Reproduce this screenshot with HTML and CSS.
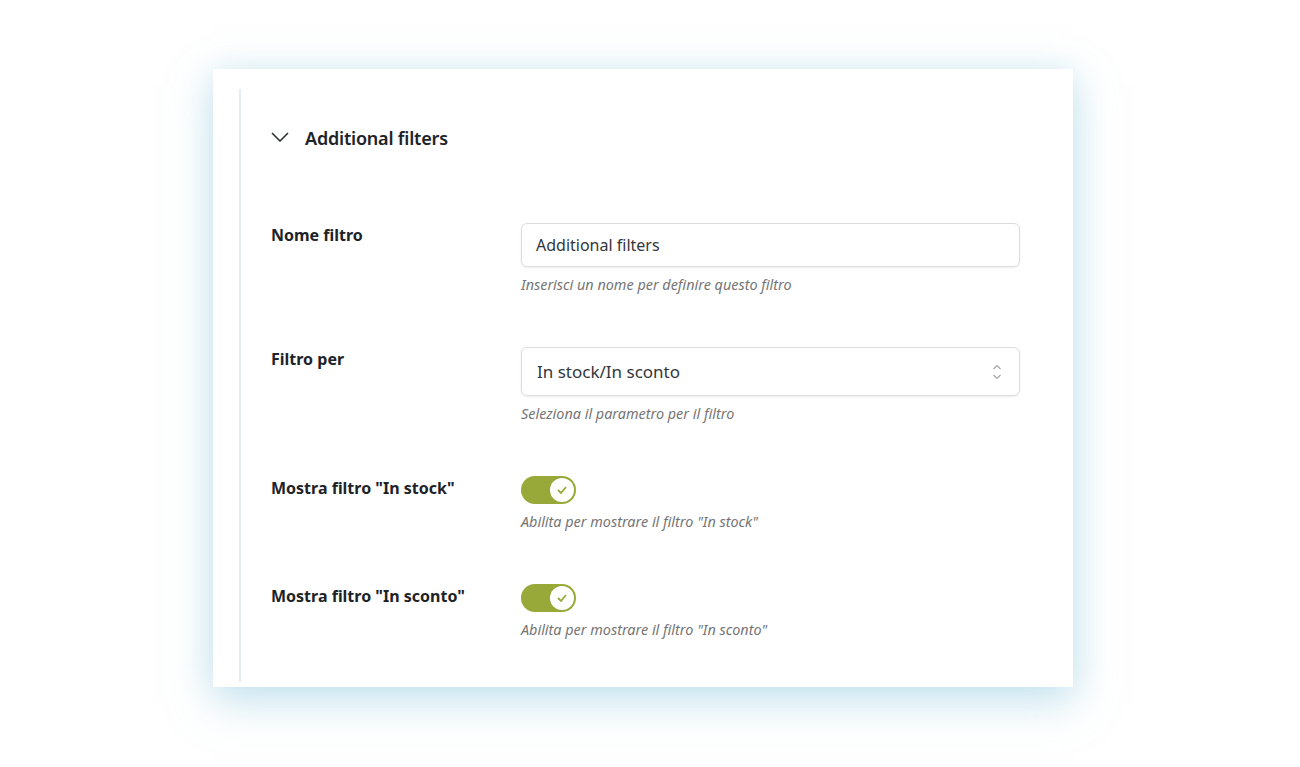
FILE: index.html
```html
<!DOCTYPE html>
<html lang="it">
<head>
    <meta charset="UTF-8">
    <meta name="viewport" content="width=device-width, initial-scale=1.0">
    <link rel="stylesheet" href="styles.css">
    <title>Additional filters</title>
</head>
<body>

    <div class="scheda">
        <div class="sezione">

            <div class="testata">
                <svg class="freccia" width="18" height="10" viewBox="0 0 18 10">
                    <path d="M1 1 L9 9 L17 1" fill="none" stroke="#2c3338" stroke-width="1.6"/>
                </svg>
                <h2>Additional filters</h2>
            </div>

            <div class="riga">
                <label class="etichetta">Nome filtro</label>
                <div class="campo">
                    <div class="input">Additional filters</div>
                    <p class="aiuto">Inserisci un nome per definire questo filtro</p>
                </div>
            </div>

            <div class="riga">
                <label class="etichetta">Filtro per</label>
                <div class="campo">
                    <div class="input select">
                        <span>In stock/In sconto</span>
                        <svg width="10" height="18" viewBox="0 0 10 18">
                            <path d="M1.5 6 L5 2.5 L8.5 6" fill="none" stroke="#a0a5aa" stroke-width="1.2"/>
                            <path d="M1.5 12 L5 15.5 L8.5 12" fill="none" stroke="#a0a5aa" stroke-width="1.2"/>
                        </svg>
                    </div>
                    <p class="aiuto">Seleziona il parametro per il filtro</p>
                </div>
            </div>

            <div class="riga">
                <label class="etichetta">Mostra filtro "In stock"</label>
                <div class="campo">
                    <div class="interruttore">
                        <span class="pallino">
                            <svg width="10" height="8" viewBox="0 0 10 8">
                                <path d="M1 4 L4 7 L9 1" fill="none" stroke="#98a939" stroke-width="1.8"/>
                            </svg>
                        </span>
                    </div>
                    <p class="aiuto">Abilita per mostrare il filtro "In stock"</p>
                </div>
            </div>

            <div class="riga">
                <label class="etichetta">Mostra filtro "In sconto"</label>
                <div class="campo">
                    <div class="interruttore">
                        <span class="pallino">
                            <svg width="10" height="8" viewBox="0 0 10 8">
                                <path d="M1 4 L4 7 L9 1" fill="none" stroke="#98a939" stroke-width="1.8"/>
                            </svg>
                        </span>
                    </div>
                    <p class="aiuto">Abilita per mostrare il filtro "In sconto"</p>
                </div>
            </div>

        </div>
    </div>

</body>
</html>
```

FILE: styles.css
```css
body {
    margin: 0;
    padding-bottom: 80px;
    background-color: #ffffff;
    font-family: "Noto Sans", "Open Sans", sans-serif;
    color: #1d2327;
}

.scheda {
    width: 860px;
    height: 618px;
    box-sizing: border-box;
    margin: 69px 0 0 213px;
    padding: 20px 0 5px 26px;
    background-color: #ffffff;
    box-shadow: 0 16px 40px rgba(160, 210, 228, 0.5), 0 0 30px rgba(190, 225, 238, 0.45);
}

.sezione {
    height: 100%;
    border-left: 2px solid #e6ebf0;
    padding-left: 30px;
}

.testata {
    display: flex;
    align-items: center;
    gap: 16px;
    padding-top: 35px;
    height: 28px;
    margin-bottom: 71px;
}
.testata h2 {
    margin: 0;
    font-size: 18px;
    font-weight: 600;
    color: #1d2327;
    letter-spacing: -0.2px;
}
.freccia {
    margin-top: -3px;
}

.riga {
    display: flex;
    margin-bottom: 52px;
}
.etichetta {
    width: 250px;
    flex-shrink: 0;
    font-size: 16px;
    line-height: 24px;
    font-weight: 700;
    color: #1d2327;
}
.campo {
    width: 499px;
}

.input {
    height: 44px;
    box-sizing: border-box;
    border: 1px solid #dcdde0;
    border-radius: 6px;
    padding: 0 14px;
    display: flex;
    align-items: center;
    font-size: 16px;
    color: #32373c;
    box-shadow: 0 1px 2px rgba(0, 0, 0, 0.08);
}
.select {
    height: 49px;
    justify-content: space-between;
    font-size: 17px;
    padding: 0 17px 0 15px;
}

.aiuto {
    margin: 8px 0 0;
    font-size: 14.4px;
    line-height: 20px;
    font-style: italic;
    color: #757575;
}

.interruttore {
    width: 55px;
    height: 28px;
    border-radius: 14px;
    background-color: #98a939;
    position: relative;
    margin-bottom: 2px;
}
.pallino {
    position: absolute;
    right: 2px;
    top: 2px;
    width: 24px;
    height: 24px;
    border-radius: 50%;
    background-color: #ffffff;
    display: flex;
    align-items: center;
    justify-content: center;
}
```
